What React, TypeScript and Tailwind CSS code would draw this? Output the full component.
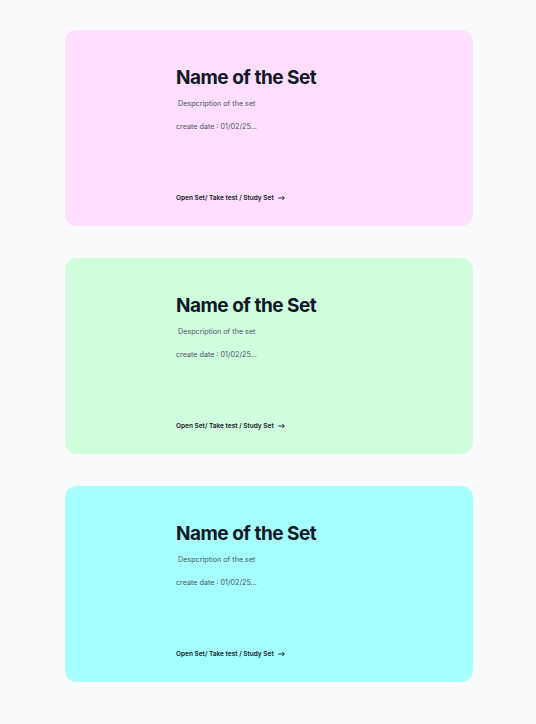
import React from "react";

type SetCard = {
  name: string;
  description: string;
  date: string;
  bg: string;
};

const sets: SetCard[] = [
  { name: "Name of the Set", description: "Despcription of the set", date: "01/02/25...", bg: "bg-[#ffdeff]" },
  { name: "Name of the Set", description: "Despcription of the set", date: "01/02/25...", bg: "bg-[#d0fdde]" },
  { name: "Name of the Set", description: "Despcription of the set", date: "01/02/25...", bg: "bg-[#a5ffff]" },
];

const Card: React.FC<{ set: SetCard }> = ({ set }) => (
  <div className={`${set.bg} w-[408px] h-[196px] rounded-xl flex flex-col pl-[111px] pt-[36px] pb-[23px]`}>
    <h2 className="text-[19px] leading-[24px] font-bold text-[#111827] tracking-[-0.5px]">{set.name}</h2>
    <p className="text-[7.2px] leading-[10px] text-[#4b5563] mt-[9px] pl-[2px]">{set.description}</p>
    <p className="text-[7.2px] leading-[10px] text-[#4b5563] mt-[13px]">create date : {set.date}</p>
    <div className="mt-auto flex items-center gap-[4px] text-[6.5px] leading-[10px] font-semibold text-[#111827]">
      <span>Open Set/ Take test / Study Set</span>
      <svg width="7" height="6" viewBox="0 0 7 6" fill="none" stroke="currentColor" strokeWidth="0.9">
        <path d="M0.3 3h6M4.3 1l2 2-2 2" />
      </svg>
    </div>
  </div>
);

export default function App() {
  return (
    <div
      className="min-h-screen bg-[#f8fafc] flex flex-col gap-[32px] pl-[65px] pt-[30px] pb-[42px]"
      style={{ fontFamily: "Inter, 'Noto Sans', sans-serif" }}
    >
      {sets.map((s, i) => (
        <Card key={i} set={s} />
      ))}
    </div>
  );
}
